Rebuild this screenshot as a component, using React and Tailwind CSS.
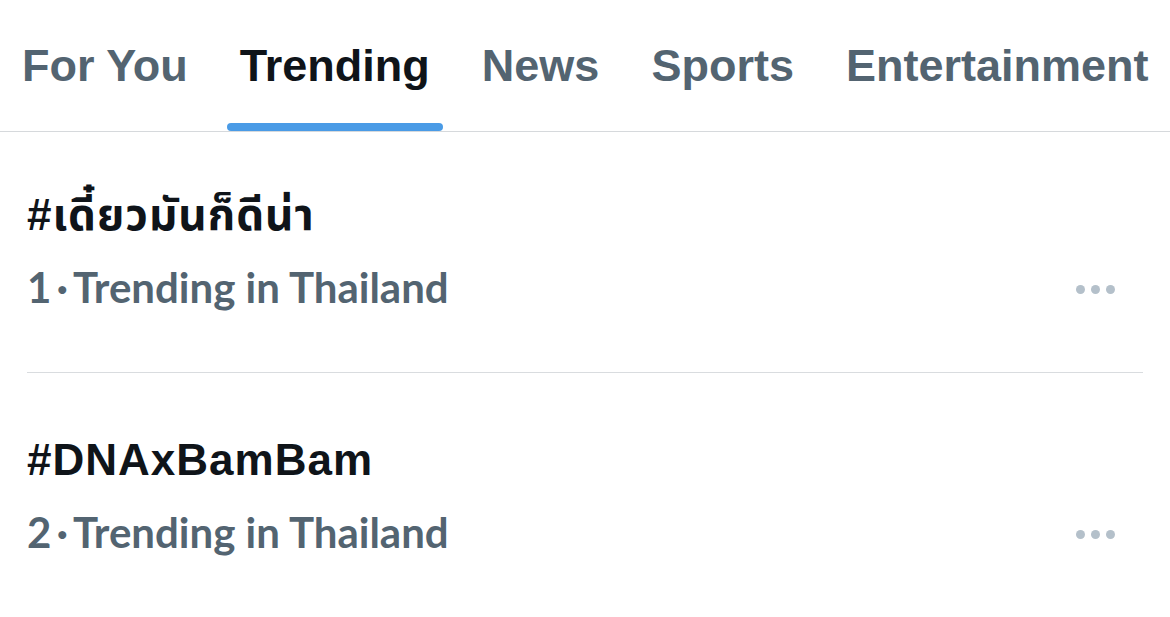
const tabs = ['For You', 'Trending', 'News', 'Sports', 'Entertainment'];

const trends = [
  { rank: 1, tag: '#เดี๋ยวมันก็ดีน่า', where: 'Trending in Thailand' },
  { rank: 2, tag: '#DNAxBamBam', where: 'Trending in Thailand' },
];

function MoreDots() {
  return (
    <div className="flex items-center gap-[6px] mt-[5px]">
      <span className="w-[9px] h-[9px] rounded-full bg-[#b4c0ca]" />
      <span className="w-[9px] h-[9px] rounded-full bg-[#b4c0ca]" />
      <span className="w-[9px] h-[9px] rounded-full bg-[#b4c0ca]" />
    </div>
  );
}

export default function App() {
  const active = 'Trending';

  return (
    <div className="w-[1170px] h-[617px] bg-white overflow-hidden">
      {/* Tabs */}
      <div className="flex pl-[9px] gap-[26px] border-b border-[#d6d9dc] font-['Liberation_Sans',Arial,sans-serif]">
        {tabs.map((t) => (
          <div key={t} className="flex flex-col items-stretch">
            <span
              className={`px-[13px] pt-[36px] h-[123px] text-[45px] leading-[60px] font-bold whitespace-nowrap ${
                t === active ? 'text-[#0f1419]' : 'text-[#536471]'
              }`}
            >
              {t}
            </span>
            <span className={`h-[8px] rounded-full ${t === active ? 'bg-[#4a9be6]' : 'bg-transparent'}`} />
          </div>
        ))}
      </div>

      {/* Trends */}
      <div>
        {trends.map((item, i) => (
          <div key={item.rank}>
            {i > 0 && <div className="mx-[27px] h-px bg-[#d9dcdf]" />}
            <div className={`pl-[27px] pr-[55px] ${i === 0 ? 'pt-[59px] pb-[61px]' : 'pt-[63px] pb-[40px]'}`}>
              <div className="text-[44px] leading-[48px] font-bold tracking-[1px] text-[#0f1419] font-['Liberation_Sans','Noto_Sans_Thai','Noto_Sans',sans-serif]">
                {item.tag}
              </div>
              <div className="mt-[24px] flex items-center justify-between">
                <span className="text-[42px] leading-[48px] font-bold text-[#536471] font-['Lato','Open_Sans',sans-serif]">
                  {item.rank}
                  <span className="mx-[5px]">·</span>
                  {item.where}
                </span>
                <MoreDots />
              </div>
            </div>
          </div>
        ))}
      </div>
    </div>
  );
}
